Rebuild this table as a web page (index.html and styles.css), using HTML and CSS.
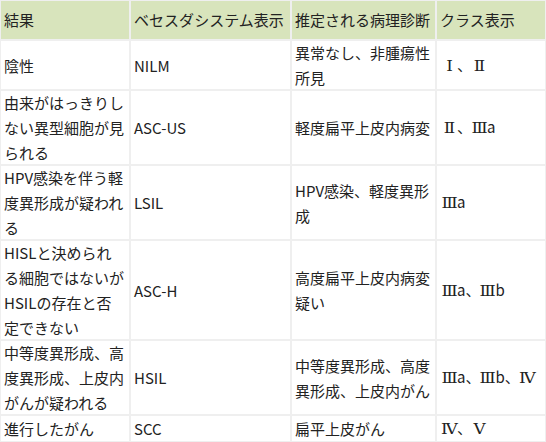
FILE: index.html
```html
<!DOCTYPE html>
<html lang="ja">
<head>
<meta charset="utf-8">
<link rel="stylesheet" href="styles.css">
</head>
<body>
<table class="tbl">
  <colgroup>
    <col class="c1"><col class="c2"><col class="c3"><col class="c4">
  </colgroup>
  <thead>
    <tr><th>結果</th><th>ベセスダシステム表示</th><th>推定される病理診断</th><th>クラス表示</th></tr>
  </thead>
  <tbody>
    <tr><td>陰性</td><td>NILM</td><td>異常なし、非腫瘍性所見</td><td><span class="rn">Ⅰ</span>、<span class="rn">Ⅱ</span></td></tr>
    <tr><td>由来がはっきりしない異型細胞が見られる</td><td>ASC-US</td><td>軽度扁平上皮内病変</td><td><span class="rn">Ⅱ</span>、<span class="rn">Ⅲ</span>a</td></tr>
    <tr><td>HPV感染を伴う軽度異形成が疑われる</td><td>LSIL</td><td>HPV感染、軽度異形成</td><td><span class="rn">Ⅲ</span>a</td></tr>
    <tr><td>HISLと決められる細胞ではないがHSILの存在と否定できない</td><td>ASC-H</td><td>高度扁平上皮内病変疑い</td><td><span class="rn">Ⅲ</span>a、<span class="rn">Ⅲ</span>b</td></tr>
    <tr><td>中等度異形成、高度異形成、上皮内がんが疑われる</td><td>HSIL</td><td>中等度異形成、高度異形成、上皮内がん</td><td><span class="rn">Ⅲ</span>a、<span class="rn">Ⅲ</span>b、<span class="rn">Ⅳ</span></td></tr>
    <tr><td>進行したがん</td><td>SCC</td><td>扁平上皮がん</td><td><span class="rn">Ⅳ</span>、<span class="rn">Ⅴ</span></td></tr>
  </tbody>
</table>
</body>
</html>
```
FILE: styles.css
```css
html, body {
  margin: 0;
  padding: 0;
  background: #ffffff;
}
.tbl {
  width: 546px;
  table-layout: fixed;
  border-collapse: separate;
  border-spacing: 0;
  font-family: "Noto Sans CJK JP", "Noto Sans", sans-serif;
  font-size: 15px;
  color: #222;
  box-shadow: inset 1px 1px 0 #d8d8d8, inset -1px 0 0 #d8d8d8;
}
.c1 { width: 130px; }
.c2 { width: 161px; }
.c3 { width: 145px; }
.c4 { width: 110px; }
.tbl th, .tbl td {
  padding: 0 4px;
  line-height: 25px;
  text-align: left;
  vertical-align: middle;
  font-weight: normal;
  word-break: break-all;
  box-shadow: inset -1px -1px 0 #efefef, inset 1px 1px 0 #efefef;
}
.tbl th {
  background: #d8e4bc;
  padding-top: 7px;
  padding-bottom: 8px;
}
.tbl td:nth-child(4) {
  padding-left: 6px;
}
.rn {
  display: inline-block;
  width: 15px;
  text-align: center;
  font-family: "DejaVu Serif", serif;
  font-size: 14px;
  transform: scaleX(1.2);
}
```
